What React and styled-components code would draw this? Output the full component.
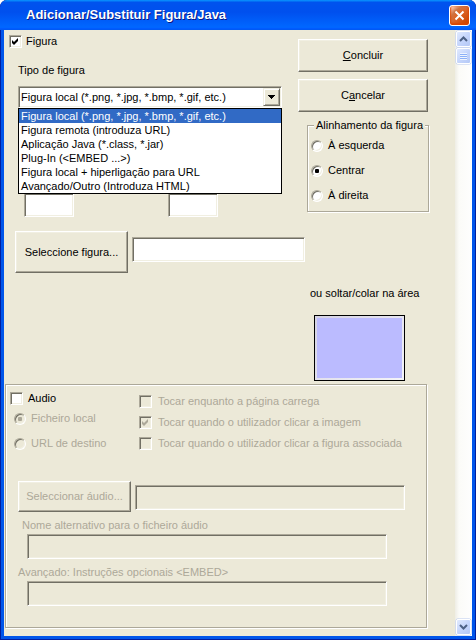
import React from 'react'
import styled, { createGlobalStyle } from 'styled-components'

const FACE = '#ECE9D8'
const GREY = '#ACA899'
const DARK = '#716F64'
const LIGHT = '#F1EFE2'

const GlobalStyle = createGlobalStyle`
  html, body { margin: 0; padding: 0; background: #fff; }
  body {
    font-family: "Liberation Sans", Arial, sans-serif;
    font-size: 11px;
    line-height: 13px;
    color: #000;
  }
`

const Window = styled.div`
  width: 476px;
  height: 640px;
  display: flex;
  flex-direction: column;
  background: #0055ea;
  border-radius: 7px 7px 0 0;
  box-shadow: inset 1px 0 #001ea0, inset -1px 0 #001ea0, inset 0 -1px #001ea0;
  overflow: hidden;
`

const TitleBar = styled.div`
  height: 30px;
  flex: none;
  display: flex;
  align-items: center;
  justify-content: space-between;
  padding: 0 6px 0 26px;
  background: linear-gradient(180deg, #0997ff, #0053ee 8%, #0050ee 40%, #0066ff 88%, #0066ff 93%, #005bff 95%, #0058ee 100%);
  border-radius: 7px 7px 0 0;
`

const TitleText = styled.span`
  color: #fff;
  font-weight: bold;
  font-size: 13px;
  padding-bottom: 1px;
  text-shadow: 1px 1px #0a1883;
`

const CloseButton = styled.div`
  width: 21px;
  height: 21px;
  box-sizing: border-box;
  border: 1px solid #fff;
  border-radius: 3px;
  background: radial-gradient(circle at 90% 90%, #cc4600 0, #dc6527 55%, #cd7546 70%, #ffccb2 90%, #fff 100%);
  box-shadow: inset 0 -1px 2px 1px #da4600;
  display: flex;
  align-items: center;
  justify-content: center;
  margin-top: 1px;
`

const Frame = styled.div`
  flex: 1;
  min-height: 0;
  display: flex;
  padding: 0 4px 4px;
`

const Client = styled.div`
  flex: 1;
  display: flex;
  background: ${FACE};
`

const Content = styled.div`
  width: 451px;
  flex: none;
  display: flex;
  flex-direction: column;
`

const TopArea = styled.div`
  display: grid;
  grid-template-columns: 294px 1fr;
  align-items: start;
`

const LeftCol = styled.div`
  display: flex;
  flex-direction: column;
  align-items: flex-start;
`

const RightCol = styled.div`
  display: flex;
  flex-direction: column;
  align-items: flex-start;
  gap: 7px;
  padding-top: 9px;
`

const OptionRow = styled.label`
  display: flex;
  align-items: center;
  gap: ${p => p.$gap || 5}px;
  height: 13px;
  margin: ${p => p.$top || 0}px 0 0 ${p => p.$left || 0}px;
  color: ${p => (p.$disabled ? GREY : '#000')};
  white-space: nowrap;
`

const Caption = styled.div`
  margin: ${p => p.$top}px 0 0 ${p => p.$left}px;
  color: ${p => (p.$disabled ? GREY : '#000')};
  white-space: nowrap;
`

const Box = styled.span`
  width: 13px;
  height: 13px;
  flex: none;
  box-sizing: border-box;
  border: 1px solid;
  border-color: ${GREY} #fff #fff ${GREY};
  box-shadow: inset 1px 1px ${DARK}, inset -1px -1px ${LIGHT};
  background: ${p => (p.$disabled ? FACE : '#fff')};
  display: flex;
  align-items: center;
  justify-content: center;
`

const RadioDot = styled.span`
  width: 12px;
  height: 12px;
  flex: none;
  box-sizing: border-box;
  border-radius: 50%;
  border: 1px solid;
  border-color: ${GREY} #fff #fff ${GREY};
  box-shadow: inset 1px 1px ${DARK}, inset -1px -1px ${LIGHT};
  background: ${p => (p.$disabled ? FACE : '#fff')};
  display: flex;
  align-items: center;
  justify-content: center;
  &::after {
    content: '';
    display: ${p => (p.$checked ? 'block' : 'none')};
    width: 4px;
    height: 4px;
    border-radius: 1px;
    background: ${p => (p.$disabled ? GREY : '#000')};
  }
`

const Button = styled.div`
  width: ${p => p.$w}px;
  height: ${p => p.$h}px;
  flex: none;
  box-sizing: border-box;
  border: 1px solid;
  border-color: #fff ${DARK} ${DARK} #fff;
  box-shadow: inset -1px -1px ${GREY}, inset 1px 1px ${LIGHT};
  background: ${FACE};
  display: flex;
  align-items: center;
  justify-content: center;
  color: ${p => (p.$disabled ? GREY : '#000')};
  white-space: nowrap;
  margin-left: ${p => p.$left || 0}px;
`

const Field = styled.div`
  width: ${p => p.$w}px;
  height: ${p => p.$h}px;
  flex: none;
  box-sizing: border-box;
  border: 1px solid;
  border-color: ${GREY} #fff #fff ${GREY};
  box-shadow: inset 1px 1px ${DARK}, inset -1px -1px ${LIGHT};
  background: ${p => (p.$disabled ? FACE : '#fff')};
  margin: ${p => p.$top || 0}px 0 0 ${p => p.$left || 0}px;
`

const ComboWrap = styled.div`
  position: relative;
  margin: 9px 0 0 14px;
`

const Combo = styled(Field)`
  display: flex;
  align-items: center;
  padding: 1px;
`

const ComboText = styled.span`
  flex: 1;
  padding-left: 1px;
  white-space: nowrap;
`

const ComboButton = styled.span`
  width: 17px;
  height: 18px;
  box-sizing: border-box;
  border: 1px solid;
  border-color: ${LIGHT} ${DARK} ${DARK} ${LIGHT};
  box-shadow: inset 1px 1px #fff, inset -1px -1px ${GREY};
  background: ${FACE};
  display: flex;
  align-items: center;
  justify-content: center;
`

const DropList = styled.ul`
  position: absolute;
  top: 100%;
  left: 0;
  z-index: 2;
  width: 264px;
  box-sizing: border-box;
  margin: 0;
  padding: 0;
  list-style: none;
  border: 1px solid #000;
  background: #fff;
`

const DropItem = styled.li`
  height: 14px;
  line-height: 14px;
  padding-left: 2px;
  white-space: nowrap;
  background: ${p => (p.$active ? '#316AC5' : 'transparent')};
  color: ${p => (p.$active ? '#fff' : '#000')};
`

const SizeRow = styled.div`
  display: flex;
  gap: 94px;
  margin: 85px 0 0 20px;
`

const SelectRow = styled.div`
  display: flex;
  align-items: flex-start;
  gap: 4px;
  margin: 14px 0 0 11px;
`

const AlignGroup = styled.fieldset`
  width: 120px;
  box-sizing: border-box;
  margin: 0 0 0 9px;
  padding: 7px 3px 9px;
  border: 1px solid ${GREY};
  box-shadow: inset 1px 1px #fff, 1px 1px #fff;
  display: flex;
  flex-direction: column;
  gap: 12px;
  legend {
    margin-left: 3px;
    padding: 0 2px;
    background: ${FACE};
    white-space: nowrap;
  }
`

const DropArea = styled.div`
  display: flex;
  flex-direction: column;
  align-items: flex-start;
`

const Preview = styled.div`
  width: 91px;
  height: 66px;
  box-sizing: border-box;
  margin: 15px 0 0 310px;
  border: 1px solid #000;
  padding: 2px;
  background: linear-gradient(135deg, #d4d2e4, #f4f4f8);
  &::after {
    content: '';
    display: block;
    height: 100%;
    background: #bbbbff;
  }
`

const AudioGroup = styled.div`
  width: 422px;
  height: 244px;
  box-sizing: border-box;
  margin: 3px 0 0 1px;
  padding: 7px 0 0 4px;
  border: 1px solid ${GREY};
  box-shadow: inset 1px 1px #fff, 1px 1px #fff;
  display: flex;
  flex-direction: column;
  align-items: flex-start;
`

const AudioOptions = styled.div`
  display: grid;
  grid-template-columns: 129px 1fr;
  align-items: start;
`

const OptionCol = styled.div`
  display: flex;
  flex-direction: column;
  gap: ${p => p.$gap || 0}px;
  padding-top: ${p => p.$top || 0}px;
`

const AudioFileRow = styled.div`
  display: flex;
  align-items: flex-start;
  gap: 4px;
  margin: 31px 0 0 8px;
`

const ScrollBar = styled.div`
  width: 17px;
  flex: none;
  box-sizing: border-box;
  padding: 1px;
  display: flex;
  flex-direction: column;
  gap: 1px;
  background: linear-gradient(to right, #eeede5, #fbfbf8 4px, #fefefe);
`

const ScrollButton = styled.div`
  width: 15px;
  height: 16px;
  box-sizing: border-box;
  border-radius: 2px;
  border: 1px solid #fff;
  background: linear-gradient(135deg, #e1eafe 0%, #c6d6fc 50%, #b4c8f6 100%);
  box-shadow: 0 0 0 0.5px #b9c9ee;
  display: flex;
  align-items: center;
  justify-content: center;
`

const Grip = styled.div`
  width: 7px;
  height: 7px;
  background: repeating-linear-gradient(180deg, #eef4fe 0 1px, #8cb0f8 1px 2px);
`

const Track = styled.div`
  flex: 1;
`

const Check = ({ color = '#000' }) => (
  <svg width="7" height="7" viewBox="0 0 7 7">
    <polygon points="0,2 2,4 6,0 6,3 2,7 0,5" fill={color} />
  </svg>
)

const CheckBox = ({ checked, disabled }) => (
  <Box $disabled={disabled}>{checked && <Check color={disabled ? GREY : '#000'} />}</Box>
)

const types = [
  'Figura local (*.png, *.jpg, *.bmp, *.gif, etc.)',
  'Figura remota (introduza URL)',
  'Aplicação Java (*.class, *.jar)',
  'Plug-In (<EMBED ...>)',
  'Figura local + hiperligação para URL',
  'Avançado/Outro (Introduza HTML)',
]

export default function App() {
  return (
    <>
      <GlobalStyle />
      <Window>
        <TitleBar>
          <TitleText>Adicionar/Substituir Figura/Java</TitleText>
          <CloseButton>
            <svg width="11" height="11" viewBox="0 0 11 11">
              <path d="M1.5 1.5 L9.5 9.5 M9.5 1.5 L1.5 9.5" stroke="#fff" strokeWidth="2" />
            </svg>
          </CloseButton>
        </TitleBar>
        <Frame>
          <Client>
            <Content>
              <TopArea>
                <LeftCol>
                  <OptionRow $top={5} $left={5} $gap={4}>
                    <CheckBox checked />
                    Figura
                  </OptionRow>
                  <Caption $top={16} $left={14}>Tipo de figura</Caption>
                  <ComboWrap>
                    <Combo $w={264} $h={22}>
                      <ComboText>{types[0]}</ComboText>
                      <ComboButton>
                        <svg width="7" height="4" viewBox="0 0 7 4">
                          <path d="M0 0h7v1h-1v1h-1v1h-1v1h-1v-1h-1v-1h-1v-1h-1z" fill="#000" />
                        </svg>
                      </ComboButton>
                    </Combo>
                    <DropList>
                      {types.map((t, i) => (
                        <DropItem key={`type-${i}`} $active={i === 0}>{t}</DropItem>
                      ))}
                    </DropList>
                  </ComboWrap>
                  <SizeRow>
                    <Field $w={50} $h={24} />
                    <Field $w={50} $h={24} />
                  </SizeRow>
                  <SelectRow>
                    <Button $w={113} $h={42}>Seleccione figura...</Button>
                    <Field $w={173} $h={25} $top={6} />
                  </SelectRow>
                </LeftCol>
                <RightCol>
                  <Button $w={130} $h={33}><u>C</u>oncluir</Button>
                  <Button $w={130} $h={33}>C<u>a</u>ncelar</Button>
                  <AlignGroup>
                    <legend>Alinhamento da figura</legend>
                    <OptionRow>
                      <RadioDot />
                      À esquerda
                    </OptionRow>
                    <OptionRow>
                      <RadioDot $checked />
                      Centrar
                    </OptionRow>
                    <OptionRow>
                      <RadioDot />
                      À direita
                    </OptionRow>
                  </AlignGroup>
                </RightCol>
              </TopArea>
              <DropArea>
                <Caption $top={14} $left={306}>ou soltar/colar na área</Caption>
                <Preview />
              </DropArea>
              <AudioGroup>
                <AudioOptions>
                  <OptionCol>
                    <OptionRow>
                      <CheckBox />
                      Audio
                    </OptionRow>
                    <OptionRow $top={7} $left={4} $disabled>
                      <RadioDot $checked $disabled />
                      Ficheiro local
                    </OptionRow>
                    <OptionRow $top={12} $left={4} $disabled>
                      <RadioDot $disabled />
                      URL de destino
                    </OptionRow>
                  </OptionCol>
                  <OptionCol $top={3} $gap={8}>
                    <OptionRow $disabled $gap={6}>
                      <CheckBox disabled />
                      Tocar enquanto a página carrega
                    </OptionRow>
                    <OptionRow $disabled $gap={6}>
                      <CheckBox checked disabled />
                      Tocar quando o utilizador clicar a imagem
                    </OptionRow>
                    <OptionRow $disabled $gap={6}>
                      <CheckBox disabled />
                      Tocar quando o utilizador clicar a figura associada
                    </OptionRow>
                  </OptionCol>
                </AudioOptions>
                <AudioFileRow>
                  <Button $w={113} $h={31} $disabled>Seleccionar áudio...</Button>
                  <Field $w={270} $h={25} $top={4} $disabled />
                </AudioFileRow>
                <Caption $top={7} $left={12} $disabled>Nome alternativo para o ficheiro áudio</Caption>
                <Field $w={360} $h={25} $top={2} $left={17} $disabled />
                <Caption $top={7} $left={8} $disabled>Avançado: Instruções opcionais &lt;EMBED&gt;</Caption>
                <Field $w={360} $h={25} $top={2} $left={17} $disabled />
              </AudioGroup>
            </Content>
            <ScrollBar>
              <ScrollButton>
                <svg width="9" height="6" viewBox="0 0 9 6">
                  <path d="M1 5 L4.5 1.5 L8 5" stroke="#4d6185" strokeWidth="2" fill="none" />
                </svg>
              </ScrollButton>
              <ScrollButton>
                <Grip />
              </ScrollButton>
              <Track />
              <ScrollButton>
                <svg width="9" height="6" viewBox="0 0 9 6">
                  <path d="M1 1 L4.5 4.5 L8 1" stroke="#4d6185" strokeWidth="2" fill="none" />
                </svg>
              </ScrollButton>
            </ScrollBar>
          </Client>
        </Frame>
      </Window>
    </>
  )
}
